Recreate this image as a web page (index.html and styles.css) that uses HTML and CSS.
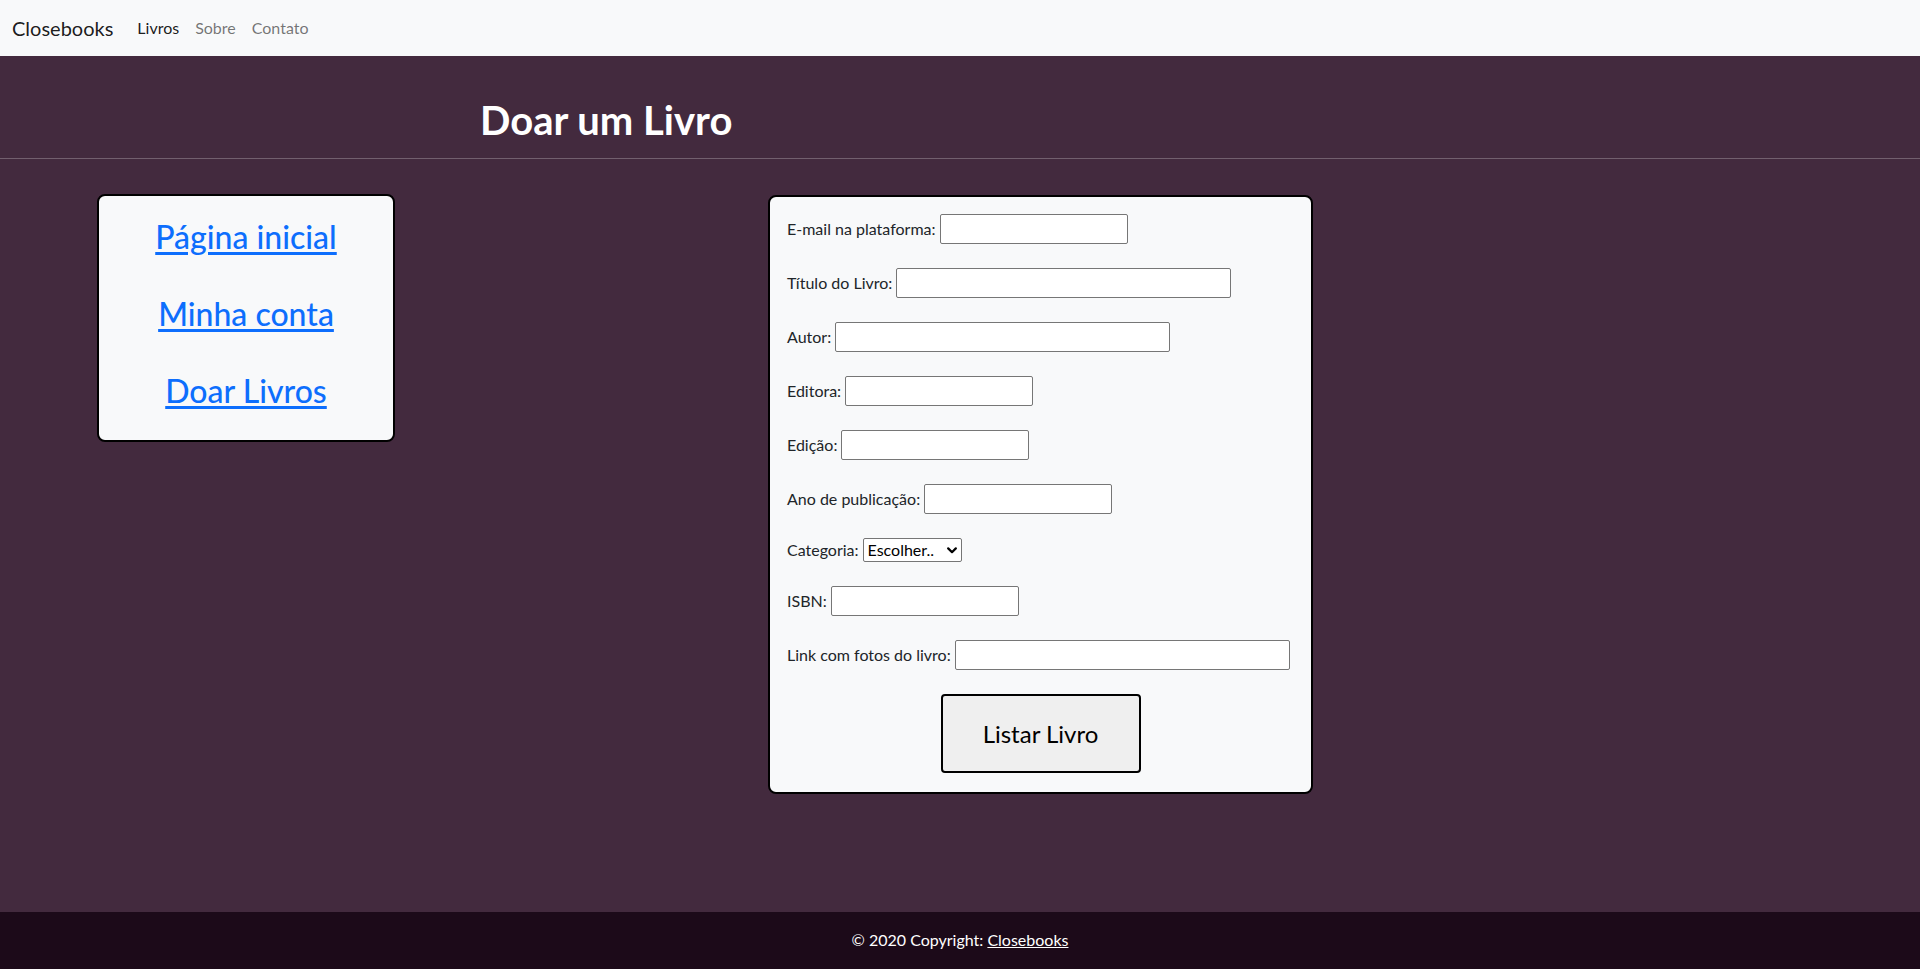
FILE: index.html
```html
<!DOCTYPE html>
<html lang="pt-BR">
<head>
<meta charset="utf-8">
<title>Closebooks - Doar um Livro</title>
<link rel="stylesheet" href="styles.css">
</head>
<body>
<nav class="navbar">
  <a class="brand" href="#">Closebooks</a>
  <ul class="nav-links">
    <li><a class="nav-link active" href="#">Livros</a></li>
    <li><a class="nav-link" href="#">Sobre</a></li>
    <li><a class="nav-link" href="#">Contato</a></li>
  </ul>
</nav>
<header class="page-header">
  <h1>Doar um Livro</h1>
</header>
<main class="content">
  <aside class="side-menu">
    <a href="#">Página inicial</a>
    <a href="#">Minha conta</a>
    <a href="#">Doar Livros</a>
  </aside>
  <form class="donate-form">
    <div class="field"><label for="email">E-mail na plataforma:</label><input id="email" type="email" class="inp"></div>
    <div class="field"><label for="titulo">Título do Livro:</label><input id="titulo" type="text" class="inp wide"></div>
    <div class="field"><label for="autor">Autor:</label><input id="autor" type="text" class="inp wide"></div>
    <div class="field"><label for="editora">Editora:</label><input id="editora" type="text" class="inp"></div>
    <div class="field"><label for="edicao">Edição:</label><input id="edicao" type="text" class="inp"></div>
    <div class="field"><label for="ano">Ano de publicação:</label><input id="ano" type="text" class="inp"></div>
    <div class="field"><label for="categoria">Categoria:</label>
      <span class="select-wrap">
        <select id="categoria" class="sel">
          <option>Escolher..</option>
          <option>Romance</option>
          <option>Ficção</option>
          <option>Didático</option>
        </select>
        <svg class="chevron" width="10" height="7" viewBox="0 0 10 7"><path d="M1.2 1.4 L5 5.2 L8.8 1.4" fill="none" stroke="#000" stroke-width="2.2" stroke-linecap="round" stroke-linejoin="round"/></svg>
      </span>
    </div>
    <div class="field"><label for="isbn">ISBN:</label><input id="isbn" type="text" class="inp"></div>
    <div class="field"><label for="link">Link com fotos do livro:</label><input id="link" type="text" class="inp wide"></div>
    <div class="actions"><button type="submit" class="btn-submit">Listar Livro</button></div>
  </form>
</main>
<footer class="footer">© 2020 Copyright: <a href="#">Closebooks</a></footer>
</body>
</html>
```
FILE: styles.css
```css
html, body {
  margin: 0;
  padding: 0;
}

body {
  font-family: Lato, "Segoe UI", "Open Sans", sans-serif;
  font-size: 16px;
  line-height: 1.5;
  color: #212529;
  background: #432a3e;
  min-height: 100vh;
  display: flex;
  flex-direction: column;
}

/* Navbar */
.navbar {
  height: 56px;
  box-sizing: border-box;
  background: #f8f9fa;
  display: flex;
  align-items: center;
  padding: 0 12px;
}

.brand {
  font-size: 20px;
  line-height: 30px;
  margin-right: 16px;
  color: rgba(0, 0, 0, 0.9);
  text-decoration: none;
}

.nav-links {
  list-style: none;
  margin: 0;
  padding: 0;
  display: flex;
}

.nav-link {
  display: block;
  padding: 8px;
  color: rgba(0, 0, 0, 0.55);
  text-decoration: none;
}

.nav-link.active {
  color: rgba(0, 0, 0, 0.9);
}

/* Header */
.page-header {
  padding: 40px 0 14px 480px;
  border-bottom: 1px solid #725f6e;
}

.page-header h1 {
  margin: 0;
  font-size: 40px;
  line-height: 48px;
  font-weight: 700;
  color: #fff;
}

/* Content */
.content {
  flex: 1;
  display: flex;
  align-items: flex-start;
  gap: 373px;
  padding: 35px 0 0 97px;
}

.side-menu {
  width: 298px;
  box-sizing: border-box;
  background: #f8f9fa;
  border: 2px solid #000;
  border-radius: 8px;
  display: flex;
  flex-direction: column;
  align-items: center;
  gap: 38.6px;
  padding: 22px 0 30px;
}

.side-menu a {
  font-size: 32px;
  line-height: 38.4px;
  font-weight: 500;
  color: #0d6efd;
  text-decoration: underline;
  text-underline-offset: 3px;
}

.donate-form {
  width: 545px;
  box-sizing: border-box;
  margin-top: 1px;
  background: #f8f9fa;
  border: 2px solid #000;
  border-radius: 8px;
  padding: 17px 17px 19px;
  display: flex;
  flex-direction: column;
  gap: 24px;
}

.field {
  display: flex;
  align-items: center;
  gap: 4px;
}

.field label {
  color: #212529;
}

.inp {
  width: 188px;
  height: 30px;
  box-sizing: border-box;
  border: 1px solid #767676;
  border-radius: 2px;
  padding: 1px 2px;
  background: #fff;
  font: inherit;
}

.inp.wide {
  width: 335px;
}

.select-wrap {
  position: relative;
  display: inline-block;
  height: 24px;
}

.sel {
  -webkit-appearance: none;
  appearance: none;
  width: 99px;
  height: 24px;
  box-sizing: border-box;
  border: 1px solid #767676;
  border-radius: 2px;
  background: #fff;
  padding: 0 0 0 4px;
  font-family: inherit;
  font-size: 16px;
  line-height: 22px;
  color: #000;
  display: block;
}

.chevron {
  position: absolute;
  right: 5px;
  top: 9px;
  pointer-events: none;
}

.actions {
  display: flex;
  justify-content: center;
}

.btn-submit {
  width: 200px;
  padding: 19px 0;
  line-height: 37px;
  font-family: inherit;
  font-size: 24px;
  color: #000;
  background: #efefef;
  border: 2px solid #000;
  border-radius: 4px;
}

/* Footer */
.footer {
  background: #1c0a19;
  color: #fff;
  text-align: center;
  padding: 16px 16px 17px;
  line-height: 24px;
}

.footer a {
  color: #fff;
  text-decoration: underline;
}
```
